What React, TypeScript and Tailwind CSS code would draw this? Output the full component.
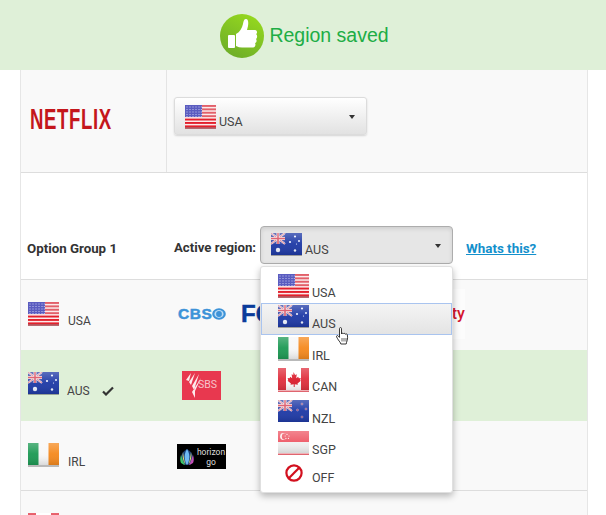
import React from "react";

const Gloss = () => (
  <>
    <defs>
      <linearGradient id="flagGloss" x1="0" y1="0" x2="0" y2="1">
        <stop offset="0" stopColor="#fff" stopOpacity="0.26" />
        <stop offset="0.5" stopColor="#fff" stopOpacity="0.04" />
        <stop offset="1" stopColor="#000" stopOpacity="0.12" />
      </linearGradient>
    </defs>
    <rect x="0" y="0" width="31" height="22" fill="url(#flagGloss)" />
  </>
);

const Union = ({ w = 14, h = 11 }: { w?: number; h?: number }) => (
  <g>
    <rect width={w} height={h} fill="#3a4aa8" />
    <path d={`M0 0L${w} ${h}M${w} 0L0 ${h}`} stroke="#f3e4e6" strokeWidth="2" />
    <path d={`M0 0L${w} ${h}M${w} 0L0 ${h}`} stroke="#d9596c" strokeWidth="0.7" />
    <path d={`M${w / 2} 0V${h}M0 ${h / 2}H${w}`} stroke="#f3e4e6" strokeWidth="3" />
    <path d={`M${w / 2} 0V${h}M0 ${h / 2}H${w}`} stroke="#d9495c" strokeWidth="1.5" />
  </g>
);

const Svg = ({ children }: { children: React.ReactNode }) => (
  <svg width="31" height="24" viewBox="0 0 31 24" className="block shrink-0">
    {children}
  </svg>
);

const Usa = () => (
  <Svg>
    <rect width="31" height="24" fill="#fbeaea" />
    {[0, 3.4, 6.8, 10.2, 13.6, 17, 20.4].map((y) => (
      <rect key={y} y={y} width="31" height="1.9" fill={y > 12 ? "#e3202c" : "#e2606a"} />
    ))}
    <rect width="17" height="12" fill="#5a5cc0" />
    {[1.5, 4, 6.5, 9, 11].map((y) =>
      [1.5, 4.5, 7.5, 10.5, 13.5, 15.8].map((x) => (
        <rect key={`${x}-${y}`} x={x} y={y} width="1" height="1" fill="#c9cbf0" />
      ))
    )}
    <rect y="22" width="31" height="2" fill="#9b2f38" opacity="0.7" />
  </Svg>
);

const Stars = ({ pts }: { pts: number[][] }) => (
  <>
    {pts.map(([x, y, r], i) => (
      <circle key={i} cx={x} cy={y} r={r} fill="#eef2ff" />
    ))}
  </>
);

const Aus = () => (
  <Svg>
    <rect width="31" height="22" fill="#1f3aa6" />
    <Union />
    <Stars pts={[[7, 17, 2.2], [24, 3.5, 1.1], [19, 9, 1.1], [28, 8, 1], [24, 17.5, 1.2], [25.5, 11, 0.6]]} />
    <Gloss />
    <rect y="22" width="31" height="1" fill="#444" opacity="0.45" />
  </Svg>
);

const Irl = () => (
  <Svg>
    <rect width="31" height="22" fill="#f7f7f7" />
    <rect width="10.5" height="22" fill="#1e9a55" />
    <rect x="20.5" width="10.5" height="22" fill="#f58a1f" />
    <Gloss />
    <rect y="22" width="31" height="2" fill="#b9b9b9" />
  </Svg>
);

const Can = () => (
  <Svg>
    <rect width="31" height="22" fill="#fff" />
    <rect width="8" height="22" fill="#e0313f" />
    <rect x="23" width="8" height="22" fill="#e0313f" />
    <path
      d="M15.5 4l1.6 3 1.7-.8-.6 4 2-1.4.6 1.4 2-.3-.7 2.3.8.6-3.4 2.6.4 1.4-3.2-.5V19h-1v-2.7l-3.2.5.4-1.4-3.4-2.6.8-.6-.7-2.3 2 .3.6-1.4 2 1.4-.6-4 1.7.8z"
      fill="#dc1f2e"
    />
    <Gloss />
    <rect y="22.6" width="31" height="1.2" fill="#d8404c" />
  </Svg>
);

const Nzl = () => (
  <Svg>
    <rect width="31" height="22" fill="#1f3aa6" />
    <Union />
    {[[24, 4], [19.5, 10], [28, 9], [24, 17]].map(([x, y]) => (
      <circle key={x + y} cx={x} cy={y} r="1.1" fill="#a94a6e" stroke="#b7c0e8" strokeWidth="0.4" />
    ))}
    <Gloss />
  </Svg>
);

const Sgp = () => (
  <Svg>
    <rect width="31" height="11" fill="#ee5a67" />
    <rect y="11" width="31" height="11" fill="#f1f1f1" />
    <circle cx="5.5" cy="5.5" r="3.4" fill="#fdf0f0" />
    <circle cx="7" cy="5.5" r="3.2" fill="#ee5a67" />
    {[[9, 3.4], [11, 5], [10.4, 7.4], [7.9, 7.4], [7.2, 5]].map(([x, y]) => (
      <circle key={x + y} cx={x} cy={y} r="0.6" fill="#fdf0f0" />
    ))}
    <Gloss />
    <rect y="22.6" width="31" height="1.2" fill="#d8404c" />
  </Svg>
);

const Off = () => (
  <svg width="31" height="24" viewBox="0 0 31 24" className="block shrink-0">
    <circle cx="16" cy="10" r="7.6" fill="none" stroke="#d2101e" strokeWidth="2.2" />
    <path d="M10.8 15.2L21.2 4.8" stroke="#d2101e" strokeWidth="2.2" />
  </svg>
);

const Caret = () => (
  <span className="block h-0 w-0 border-x-[3.5px] border-t-[4px] border-x-transparent border-t-[#333]" />
);

const FlagLabel = ({
  flag,
  label,
  labelClass = "mt-[9px]",
}: {
  flag: React.ReactNode;
  label: string;
  labelClass?: string;
}) => (
  <span className="flex items-start">
    {flag}
    <span className={`ml-[3px] text-[12.5px] leading-[16px] text-[#444] ${labelClass}`}>{label}</span>
  </span>
);

const Thumb = () => (
  <svg width="44" height="44" viewBox="0 0 44 44" className="block shrink-0">
    <defs>
      <linearGradient id="thumbBg" x1="0.7" y1="0" x2="0.2" y2="1">
        <stop offset="0" stopColor="#95d81e" />
        <stop offset="1" stopColor="#6cab2a" />
      </linearGradient>
    </defs>
    <circle cx="22" cy="22" r="22" fill="url(#thumbBg)" />
    <rect x="8" y="21" width="7" height="13" rx="1" fill="#fff" />
    <path
      d="M16 20C20 18 22 14 23 10C23.5 7 24 5 26 5C28.5 5 28.5 9 28 12L27 16L35 16C37.5 16 37.5 19.5 36 20C37.5 21 37.5 24 36 25C37 26 36.8 28.500 35 29C36 30 35.500 33.500 33 33.500L22 33.500C20 33.500 18 33 16 32Z"
      fill="#fff"
    />
  </svg>
);

const Cursor = () => (
  <svg width="14" height="19" viewBox="0 0 14 19" className="absolute left-[336px] top-[327px]">
    <path
      d="M3.500 1.500c0-1.200 2-1.200 2 0V7c.3-1 1.900-1 2 0 .3-.9 1.800-.8 2 .3.400-.7 1.800-.5 1.900.6.300 2 .3 4-.2 5.600-.4 1.300-.9 2.200-1 3.500H4.800c-.3-1.600-1.400-2.500-2.400-4-.8-1.300-1.500-2.300-1.900-3.300-.3-1 1-1.600 1.700-.8l1.300 1.500z"
      fill="#fff"
      stroke="#222"
      strokeWidth="0.9"
      strokeLinejoin="round"
    />
    <path d="M6 11v3.500M8 11v3.500M10 11v3.500" stroke="#222" strokeWidth="0.7" />
  </svg>
);

const menu = [
  { flag: <Usa />, label: "USA" },
  { flag: <Aus />, label: "AUS", active: true },
  { flag: <Irl />, label: "IRL" },
  { flag: <Can />, label: "CAN" },
  { flag: <Nzl />, label: "NZL" },
  { flag: <Sgp />, label: "SGP" },
  { flag: <Off />, label: "OFF", off: true },
];

export default function App() {
  return (
    <div
      className="relative h-[515px] w-[606px] overflow-hidden bg-white"
      style={{ fontFamily: "Roboto, 'Liberation Sans', sans-serif" }}
    >
      <div className="flex h-[70px] items-center justify-center gap-[5px] bg-[#dff0d8] pl-[3px] pt-[2px]">
        <Thumb />
        <span
          className="text-[19.5px] leading-none text-[#20ad45]"
          style={{ fontFamily: "'Liberation Sans', sans-serif" }}
        >
          Region saved
        </span>
      </div>

      <div className="ml-[20px] w-[568px] border-x border-[#e6e6e6]">
        <div className="flex h-[103px] border-b border-[#dddddd] bg-[#f9f9f9]">
          <div className="flex w-[146px] items-center border-r border-[#e4e4e4] pb-[4px] pl-[9px]">
            <span
              className="text-[30px] font-bold leading-none tracking-[1px] text-[#c4161c]"
              style={{ fontFamily: "'Liberation Sans', sans-serif", transform: "scaleX(0.62)", transformOrigin: "left" }}
            >
              NETFLIX
            </span>
          </div>
          <div className="pl-[7px] pt-[27px]">
            <div className="flex h-[38px] w-[193px] items-start justify-between rounded-[3px] border border-[#dcdcdc] bg-gradient-to-b from-white to-[#e2e2e2] pl-[10px] pr-[11px] pt-[7px] shadow-[0_1px_2px_rgba(0,0,0,0.15)]">
              <FlagLabel flag={<Usa />} label="USA" />
              <span className="mt-[10px]"><Caret /></span>
            </div>
          </div>
        </div>

        <div className="flex h-[107px] items-end border-b border-[#dddddd] pb-[15px]">
          <div className="w-[146px] pb-[7px] pl-[6px] text-[13.3px] font-bold leading-[16px] text-[#333]">
            Option Group 1
          </div>
          <div className="flex items-end">
            <span className="mb-[8px] ml-[7px] w-[86px] text-[13.2px] font-bold leading-[16px] text-[#333]">
              Active region:
            </span>
            <div className="flex h-[38px] w-[193px] items-start justify-between rounded-[4px] border border-[#adadad] bg-[#e6e6e6] pl-[10px] pr-[11px] pt-[6px] shadow-[inset_0_2px_4px_rgba(0,0,0,0.1)]">
              <FlagLabel flag={<Aus />} label="AUS" />
              <span className="mt-[11px]"><Caret /></span>
            </div>
            <a className="mb-[7px] ml-[13px] text-[13.4px] font-bold leading-[17px] text-[#1390cc] underline">
              Whats this?
            </a>
          </div>
        </div>

        <div className="flex h-[70px] bg-[#f9f9f9]">
          <div className="w-[146px] pl-[7px] pt-[22px]">
            <span className="flex items-start">
              <Usa />
              <span className="ml-[9px] mt-[11px] text-[12px] leading-[16px] text-[#444]">USA</span>
            </span>
          </div>
          <div className="flex items-center pb-[2px] pl-[11px]">
            <span
              className="flex w-[47px] items-center text-[15.5px] font-bold leading-none tracking-[0.6px] text-[#3d93d8] [-webkit-text-stroke:0.5px_#3d93d8]"
              style={{ fontFamily: "'Liberation Sans', sans-serif" }}
            >
              CBS
              <svg width="14" height="12" viewBox="0 0 14 12" className="-ml-[1px] shrink-0">
                <ellipse cx="7" cy="6" rx="6.800" ry="5.800" fill="#3d93d8" />
                <ellipse cx="7" cy="6" rx="4.600" ry="3.900" fill="#bcdcf4" />
                <circle cx="7" cy="6" r="2.900" fill="#3d93d8" />
              </svg>
            </span>
            <span
              className="ml-[16px] text-[24px] font-bold leading-none text-[#0b3c9b] [-webkit-text-stroke:0.5px_#0b3c9b]"
              style={{ fontFamily: "'Liberation Sans', sans-serif" }}
            >
              FOX
            </span>
            <span className="ml-[131px] flex h-[50px] items-center bg-[#fcfcfc] text-[16px] font-medium leading-none text-[#d5152e]">
              xfinity
            </span>
          </div>
        </div>

        <div className="flex h-[71px] bg-[#dff0d8]">
          <div className="flex w-[146px] items-start pl-[7px] pt-[22px]">
            <Aus />
            <span className="ml-[8px] mt-[11px] text-[12px] leading-[16px] text-[#444]">AUS</span>
            <svg width="12" height="10" viewBox="0 0 12 10" className="ml-[12px] mt-[14px]">
              <path d="M1 5.500l3 3L11 1.500" fill="none" stroke="#333" strokeWidth="2.200" />
            </svg>
          </div>
          <div className="pl-[15px] pt-[21px]">
            <div className="flex h-[29px] w-[39px] items-center overflow-hidden bg-[#e8384f]">
              <svg width="18" height="27" viewBox="0 0 18 27" className="ml-[2px] shrink-0">
                <path d="M7 1l-5 7 3 1zM11 1L5 10l2 3zM15 2l-7 12 2 4zM17 6l-6 13 0 7-3-6z" fill="#fdeaec" />
              </svg>
              <span className="-ml-[4px] text-[10.5px] leading-none text-[#f7c3ca]">SBS</span>
            </div>
          </div>
        </div>

        <div className="flex h-[70px] border-b border-[#dddddd] bg-[#f9f9f9]">
          <div className="w-[146px] pl-[7px] pt-[22px]">
            <span className="flex items-start">
              <Irl />
              <span className="ml-[9px] mt-[11px] text-[12px] leading-[16px] text-[#444]">IRL</span>
            </span>
          </div>
          <div className="pl-[10px] pt-[23px]">
            <div className="flex h-[25px] w-[49px] items-center bg-black">
              <svg width="18" height="21" viewBox="0 0 18 21" className="ml-[1px] shrink-0">
                <path d="M9 3C4 6 2 10 3 16c2 2 4 3 6 3s4-1 6-3c1-6-1-10-6-13z" fill="#1a3f7a" />
                <path d="M3 9c-1 3-1 6 0 8 2 1 3 2 4 2C5 15 4 12 3 9z" fill="#3fc56a" />
                <path d="M15 9c1 3 1 6 0 8-2 1-3 2-4 2 2-4 3-7 4-10z" fill="#c24fb6" />
                <path d="M9 3c-2 3-3 7-2 11 .5 2 1 4 2 5 1-1 1.500-3 2-5 1-4 0-8-2-11z" fill="#6fb9f2" />
                <path d="M5 6c-1 4 0 9 2.500 12.500C6 14 5.500 10 5 6zM13 6c1 4 0 9-2.500 12.500C12 14 12.500 10 13 6z" fill="#e8e26a" />
              </svg>
              <span className="flex flex-1 flex-col items-center text-[8.5px] leading-[10px] text-[#ddd]">
                <span>horizon</span>
                <span>go</span>
              </span>
            </div>
          </div>
        </div>

        <div className="h-[30px] bg-[#f9f9f9] pl-[7px] pt-[22px]">
          <Can />
        </div>
      </div>

      <div className="absolute left-[260px] top-[266px] flex h-[227px] w-[193px] flex-col rounded-[3px] border border-[#e0e0e0] bg-white pt-[5px] shadow-[0_3px_7px_rgba(0,0,0,0.28)]">
        {menu.map((m) => (
          <div
            key={m.label}
            className={
              m.active
                ? "flex h-[32px] items-start border border-[#a9c4ef] bg-gradient-to-b from-[#f4f4f4] to-[#e4e4e4] pl-[16px] pt-[1px]"
                : "flex h-[32px] items-start border border-transparent pl-[16px] pt-[1px]"
            }
          >
            <FlagLabel flag={m.flag} label={m.label} labelClass={m.off ? "mt-[7px]" : "mt-[11px]"} />
          </div>
        ))}
      </div>
      <Cursor />
    </div>
  );
}
